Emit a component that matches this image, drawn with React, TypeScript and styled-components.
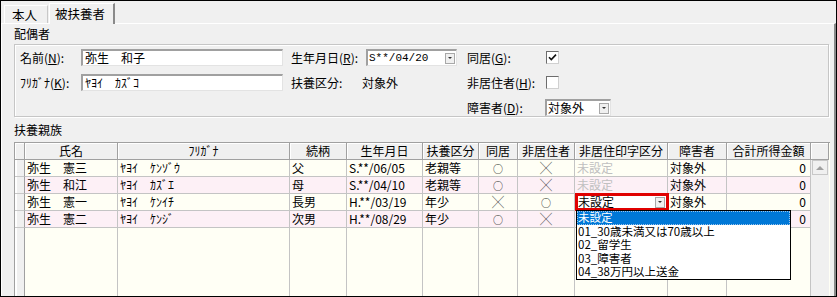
import styled, { createGlobalStyle } from "styled-components";

const GlobalStyle = createGlobalStyle`
  body {
    margin: 0;
    background: #ffffff;
  }
`;

interface Relative {
  name: string;
  kana: string;
  relation: string;
  birth: string;
  kind: string;
  live: string;
  nonRes: string;
  disabled: string;
  income: string;
}

const relatives: Relative[] = [
  { name: "弥生　憲三", kana: "ﾔﾖｲ　ｹﾝｿﾞｳ", relation: "父", birth: "S.**/06/05", kind: "老親等", live: "○", nonRes: "╳", disabled: "対象外", income: "0" },
  { name: "弥生　和江", kana: "ﾔﾖｲ　ｶｽﾞｴ", relation: "母", birth: "S.**/04/10", kind: "老親等", live: "○", nonRes: "╳", disabled: "対象外", income: "0" },
  { name: "弥生　憲一", kana: "ﾔﾖｲ　ｹﾝｲﾁ", relation: "長男", birth: "H.**/03/19", kind: "年少", live: "╳", nonRes: "○", disabled: "対象外", income: "0" },
  { name: "弥生　憲二", kana: "ﾔﾖｲ　ｹﾝｼﾞ", relation: "次男", birth: "H.**/08/29", kind: "年少", live: "○", nonRes: "╳", disabled: "", income: "0" },
];

const headers = ["", "氏名", "ﾌﾘｶﾞﾅ", "続柄", "生年月日", "扶養区分", "同居", "非居住者", "非居住印字区分", "障害者", "合計所得金額", ""];

const options = ["未設定", "01_30歳未満又は70歳以上", "02_留学生", "03_障害者", "04_38万円以上送金"];

const Mark = ({ value }: { value: string }) => <MarkGlyph $circle={value === "○"}>{value}</MarkGlyph>;

const App = () => {
  return (
    <>
      <GlobalStyle />
      <Frame>
        <TabStrip>
          <Tab>本人</Tab>
          <Tab $active>被扶養者</Tab>
        </TabStrip>

        <Panel>
          <SectionLabel>配偶者</SectionLabel>
          <GroupBox>
            <FormGrid>
              <Label>
                名前(<u>N</u>):
              </Label>
              <TextInput>弥生　和子</TextInput>
              <Label $pad={8}>
                生年月日(<u>R</u>):
              </Label>
              <Combo $width={91}>
                <ComboText $mono>S**/04/20</ComboText>
                <DropButton />
              </Combo>
              <Label $pad={10}>
                同居(<u>G</u>):
              </Label>
              <CheckBox>
                <svg width="11" height="11" viewBox="0 0 11 11">
                  <path d="M2 5.2 L4.3 7.6 L9 2.6" fill="none" stroke="#111" strokeWidth="1.6" />
                </svg>
              </CheckBox>

              <Label>ﾌﾘｶﾞﾅ(<u>K</u>):</Label>
              <TextInput>ﾔﾖｲ　ｶｽﾞｺ</TextInput>
              <Label $pad={8}>扶養区分:</Label>
              <PlainValue>対象外</PlainValue>
              <Label $pad={10}>
                非居住者(<u>H</u>):
              </Label>
              <CheckBox />

              <Label $pad={10} $col={5}>
                障害者(<u>D</u>):
              </Label>
              <Combo $width={66}>
                <ComboText>対象外</ComboText>
                <DropButton />
              </Combo>
            </FormGrid>
          </GroupBox>

          <SectionLabel $top={5}>扶養親族</SectionLabel>
          <DataGrid>
            {headers.map((h, i) => (
              <HeadCell key={i}>{h}</HeadCell>
            ))}

            {relatives.map((r, i) => {
              const pink = i % 2 === 1;
              return [
                <RowHead key={`rh${i}`} />,
                <Cell key={`a${i}`} $pink={pink}>{r.name}</Cell>,
                <Cell key={`b${i}`} $pink={pink}>{r.kana}</Cell>,
                <Cell key={`c${i}`} $pink={pink}>{r.relation}</Cell>,
                <Cell key={`d${i}`} $pink={pink}>{r.birth}</Cell>,
                <Cell key={`e${i}`} $pink={pink}>{r.kind}</Cell>,
                <Cell key={`f${i}`} $pink={pink} $align="center">
                  <Mark value={r.live} />
                </Cell>,
                <Cell key={`g${i}`} $pink={pink} $align="center">
                  <Mark value={r.nonRes} />
                </Cell>,
                i === 2 ? (
                  <EditCell key={`h${i}`}>
                    <EditCombo>
                      <span>未設定</span>
                      <DropButton />
                    </EditCombo>
                    <DropList>
                      {options.map((o, k) => (
                        <DropItem key={o} $selected={k === 0}>
                          {o}
                        </DropItem>
                      ))}
                    </DropList>
                  </EditCell>
                ) : (
                  <Cell key={`h${i}`} $pink={pink} $muted={i < 2}>
                    {i < 2 ? "未設定" : ""}
                  </Cell>
                ),
                <Cell key={`i${i}`} $pink={pink}>{r.disabled}</Cell>,
                <Cell key={`j${i}`} $pink={pink} $align="right">{r.income}</Cell>,
                i === 0 ? (
                  <ScrollBar key="sb">
                    <ScrollUp />
                  </ScrollBar>
                ) : null,
              ];
            })}

            {headers.slice(0, 11).map((_, i) =>
              i === 0 ? <RowHead key={`f${i}`} /> : <Cell key={`f${i}`} />
            )}
          </DataGrid>
        </Panel>
      </Frame>
    </>
  );
};

export default App;

const Frame = styled.div`
  width: 837px;
  height: 297px;
  box-sizing: border-box;
  border: 1px solid #000;
  background: #f0f0f0;
  overflow: hidden;
  font-family: "Noto Sans CJK JP", "Noto Sans", sans-serif;
  font-size: 12px;
  color: #000;
  display: flex;
  flex-direction: column;
`;

const TabStrip = styled.div`
  height: 22px;
  display: flex;
  align-items: flex-end;
  padding-left: 3px;
  flex-shrink: 0;
`;

const Tab = styled.div<{ $active?: boolean }>`
  box-sizing: border-box;
  height: ${({ $active }) => ($active ? "21px" : "18px")};
  padding: ${({ $active }) => ($active ? "1px 8px 0 5px" : "0 10px 0 7px")};
  line-height: 17px;
  font-size: 12.5px;
  border-top: 1px solid #fff;
  border-left: 1px solid #fff;
  border-right: ${({ $active }) => ($active ? "2px solid #8a8a8a" : "1px solid #c8c8c8")};
  margin-bottom: ${({ $active }) => ($active ? "-1px" : "0")};
  margin-left: ${({ $active }) => ($active ? "1px" : "0")};
  background: #f0f0f0;
  position: relative;
  z-index: ${({ $active }) => ($active ? 1 : 0)};
`;

const Panel = styled.div`
  flex: 1;
  min-height: 0;
  border-top: 1px solid #fff;
  border-left: 1px solid #fff;
  border-right: 2px solid #8a8a8a;
  padding: 2px 3px 0 12px;
  display: flex;
  flex-direction: column;
  overflow: hidden;
`;

const SectionLabel = styled.div<{ $top?: number }>`
  height: 16px;
  line-height: 16px;
  font-size: 12px;
  margin-top: ${({ $top }) => $top ?? 0}px;
`;

const GroupBox = styled.div`
  box-sizing: border-box;
  margin-top: 2px;
  width: 815px;
  height: 76px;
  border: 1px solid #c6c6c6;
  box-shadow: inset 1px 1px 0 #fff, 1px 1px 0 #fff;
  padding: 4px 0 0 5px;
`;

const FormGrid = styled.div`
  display: grid;
  grid-template-columns: 61px 202px 83px 91px 88px 66px;
  grid-auto-rows: 17px;
  row-gap: 8px;
  align-items: center;
`;

const Label = styled.div<{ $pad?: number; $col?: number }>`
  grid-column: ${({ $col }) => $col ?? "auto"};
  padding-left: ${({ $pad }) => $pad ?? 0}px;
  white-space: nowrap;
  line-height: 17px;

  u {
    text-decoration-thickness: 1px;
    text-underline-offset: 1px;
  }
`;

const TextInput = styled.div`
  box-sizing: border-box;
  height: 17px;
  line-height: 14px;
  background: #fff;
  border-top: 2px solid #a0a0a0;
  border-left: 2px solid #a0a0a0;
  border-right: 1px solid #e3e3e3;
  border-bottom: 1px solid #e3e3e3;
  padding-left: 2px;
  white-space: pre;
`;

const Combo = styled.div<{ $width: number }>`
  box-sizing: border-box;
  width: ${({ $width }) => $width}px;
  height: 17px;
  background: #fff;
  border-top: 2px solid #a0a0a0;
  border-left: 2px solid #a0a0a0;
  border-right: 1px solid #e3e3e3;
  border-bottom: 1px solid #e3e3e3;
  display: flex;
  align-items: center;
  justify-content: space-between;
  padding: 0 1px;
`;

const ComboText = styled.span<{ $mono?: boolean }>`
  font-family: ${({ $mono }) => ($mono ? '"Liberation Mono", monospace' : "inherit")};
  font-size: ${({ $mono }) => ($mono ? "11px" : "12px")};
  line-height: 14px;
`;

const DropButton = styled.span`
  box-sizing: border-box;
  width: 10px;
  height: 11px;
  background: #f0f0f0;
  border: 1px solid #a8a8a8;
  display: inline-flex;
  align-items: center;
  justify-content: center;
  flex-shrink: 0;

  &::after {
    content: "";
    border-left: 2px solid transparent;
    border-right: 2px solid transparent;
    border-top: 2px solid #333;
  }
`;

const PlainValue = styled.div`
  margin-left: -4px;
  line-height: 17px;
`;

const CheckBox = styled.div`
  box-sizing: border-box;
  width: 13px;
  height: 13px;
  margin-left: 1px;
  background: #fff;
  border-top: 1px solid #6d6d6d;
  border-left: 1px solid #6d6d6d;
  border-right: 1px solid #d0d0d0;
  border-bottom: 1px solid #d0d0d0;
  display: flex;
  align-items: center;
  justify-content: center;
`;

const DataGrid = styled.div`
  box-sizing: border-box;
  margin-top: 4px;
  width: 816px;
  height: 170px;
  flex-shrink: 0;
  border-top: 1px solid #a0a0a0;
  border-left: 1px solid #a0a0a0;
  background: #fffff5;
  display: grid;
  grid-template-columns: 10px 93px 172px 57px 76px 56px 39px 57px 93px 59px 84px 18px;
  grid-template-rows: 17px repeat(4, 17px) 1fr;
  position: relative;
`;

const HeadCell = styled.div`
  box-sizing: border-box;
  background: #f0f0f0;
  border-right: 1px solid #a0a0a0;
  border-bottom: 1px solid #a0a0a0;
  box-shadow: inset 1px 1px 0 #fff;
  text-align: center;
  line-height: 15px;
  white-space: nowrap;
  overflow: hidden;
`;

const RowHead = styled.div`
  box-sizing: border-box;
  background: #f0f0f0;
  border-right: 1px solid #a0a0a0;
  border-bottom: 1px solid #c8c8c8;
  box-shadow: inset 2px 0 0 #fff;
`;

const Cell = styled.div<{ $pink?: boolean; $align?: string; $muted?: boolean }>`
  box-sizing: border-box;
  background: ${({ $pink }) => ($pink ? "#fdf0f6" : "#fffff5")};
  border-right: 1px solid #c4c4c4;
  border-bottom: 1px solid #c4c4c4;
  text-align: ${({ $align }) => $align ?? "left"};
  padding: ${({ $align }) => ($align === "right" ? "0 4px 0 0" : $align === "center" ? "0" : "0 0 0 2px")};
  color: ${({ $muted }) => ($muted ? "#c0c0c0" : "#000")};
  line-height: 16px;
  white-space: pre;
  overflow: hidden;
`;

const MarkGlyph = styled.span<{ $circle?: boolean }>`
  font-size: ${({ $circle }) => ($circle ? "10px" : "12px")};
  color: #222;
`;

const EditCell = styled.div`
  position: relative;
  box-sizing: border-box;
  border-right: 1px solid #c4c4c4;
  border-bottom: 1px solid #c4c4c4;
  background: #fffff5;
`;

const EditCombo = styled.div`
  box-sizing: border-box;
  position: absolute;
  inset: -1px -2px -1px 0;
  border: 3px solid #e00000;
  background: #fff;
  display: flex;
  align-items: center;
  justify-content: space-between;
  padding: 0 1px 0 0;
  line-height: 12px;
  z-index: 2;
`;

const DropList = styled.div`
  box-sizing: border-box;
  position: absolute;
  top: 16px;
  left: 1px;
  width: 215px;
  height: 70px;
  background: #fff;
  border: 1px solid #000;
  z-index: 3;
`;

const DropItem = styled.div<{ $selected?: boolean }>`
  box-sizing: border-box;
  height: 13.6px;
  line-height: 13px;
  font-size: 11.5px;
  padding-left: 1px;
  white-space: nowrap;
  background: ${({ $selected }) => ($selected ? "#0078d7" : "#fff")};
  color: ${({ $selected }) => ($selected ? "#fff" : "#000")};
  outline: ${({ $selected }) => ($selected ? "1px dotted #9ac4ec" : "none")};
  outline-offset: -1px;
`;

const ScrollBar = styled.div`
  grid-column: 12;
  grid-row: 2 / span 5;
  background: #f0f0f0;
  padding: 0 1px;
`;

const ScrollUp = styled.div`
  box-sizing: border-box;
  width: 16px;
  height: 15px;
  border: 1px solid #c8c8c8;
  background: #f0f0f0;
  display: flex;
  align-items: center;
  justify-content: center;

  &::after {
    content: "";
    border-left: 4px solid transparent;
    border-right: 4px solid transparent;
    border-bottom: 4px solid #a0a0a0;
  }
`;
